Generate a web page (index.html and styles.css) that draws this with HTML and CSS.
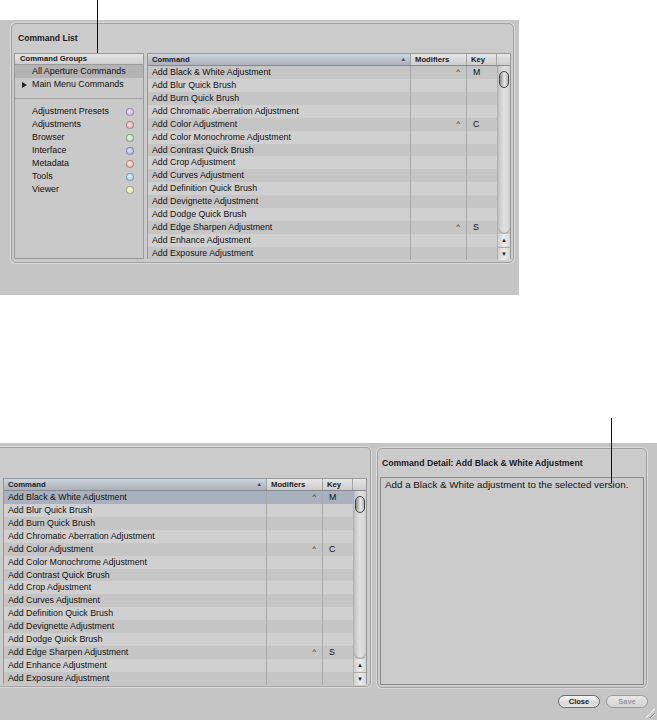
FILE: index.html
```html
<!DOCTYPE html>
<html>
<head>
<meta charset="utf-8">
<link rel="stylesheet" href="styles.css">
</head>
<body>
<div class="callout callout-top"></div>
<section class="fig fig-top">
  <div class="panel panel-list">
    <div class="panel-title">Command List</div>
    <div class="panel-body">
      <div class="groups">
        <div class="groups-head">Command Groups</div>
        <div class="group sel">All Aperture Commands</div>
        <div class="group"><svg class="tri" width="5" height="6" viewBox="0 0 5 6"><path d="M0 0 L5 3 L0 6 Z" fill="#222"/></svg>Main Menu Commands</div>
        <div class="sep"></div>
        <div class="group">Adjustment Presets<span class="dot d-purple"></span></div>
        <div class="group">Adjustments<span class="dot d-pink"></span></div>
        <div class="group">Browser<span class="dot d-green"></span></div>
        <div class="group">Interface<span class="dot d-blue"></span></div>
        <div class="group">Metadata<span class="dot d-salmon"></span></div>
        <div class="group">Tools<span class="dot d-sky"></span></div>
        <div class="group">Viewer<span class="dot d-yellow"></span></div>
      </div>
      <div class="table">
        <div class="thead">
          <div class="th th-sorted">Command<span class="sort">&#9650;</span></div>
          <div class="th">Modifiers</div>
          <div class="th">Key</div>
          <div class="th th-end"></div>
        </div>
        <div class="tbody">
          <div class="rows">
            <div class="row"><div class="c-cmd">Add Black &amp; White Adjustment</div><div class="c-mod">^</div><div class="c-key">M</div></div>
            <div class="row"><div class="c-cmd">Add Blur Quick Brush</div><div class="c-mod"></div><div class="c-key"></div></div>
            <div class="row"><div class="c-cmd">Add Burn Quick Brush</div><div class="c-mod"></div><div class="c-key"></div></div>
            <div class="row"><div class="c-cmd">Add Chromatic Aberration Adjustment</div><div class="c-mod"></div><div class="c-key"></div></div>
            <div class="row"><div class="c-cmd">Add Color Adjustment</div><div class="c-mod">^</div><div class="c-key">C</div></div>
            <div class="row"><div class="c-cmd">Add Color Monochrome Adjustment</div><div class="c-mod"></div><div class="c-key"></div></div>
            <div class="row"><div class="c-cmd">Add Contrast Quick Brush</div><div class="c-mod"></div><div class="c-key"></div></div>
            <div class="row"><div class="c-cmd">Add Crop Adjustment</div><div class="c-mod"></div><div class="c-key"></div></div>
            <div class="row"><div class="c-cmd">Add Curves Adjustment</div><div class="c-mod"></div><div class="c-key"></div></div>
            <div class="row"><div class="c-cmd">Add Definition Quick Brush</div><div class="c-mod"></div><div class="c-key"></div></div>
            <div class="row"><div class="c-cmd">Add Devignette Adjustment</div><div class="c-mod"></div><div class="c-key"></div></div>
            <div class="row"><div class="c-cmd">Add Dodge Quick Brush</div><div class="c-mod"></div><div class="c-key"></div></div>
            <div class="row"><div class="c-cmd">Add Edge Sharpen Adjustment</div><div class="c-mod">^</div><div class="c-key">S</div></div>
            <div class="row"><div class="c-cmd">Add Enhance Adjustment</div><div class="c-mod"></div><div class="c-key"></div></div>
            <div class="row"><div class="c-cmd">Add Exposure Adjustment</div><div class="c-mod"></div><div class="c-key"></div></div>
          </div>
          <div class="scroll">
            <div class="track"><div class="thumb"></div></div>
            <div class="arrows"><div class="arr">&#9650;</div><div class="arr">&#9660;</div></div>
          </div>
        </div>
      </div>
    </div>
  </div>
</section>

<div class="callout callout-bottom"></div>
<section class="fig fig-bottom">
  <div class="panes">
    <div class="panel panel-cut">
      <div class="table">
        <div class="thead">
          <div class="th th-sorted">Command<span class="sort">&#9650;</span></div>
          <div class="th">Modifiers</div>
          <div class="th">Key</div>
          <div class="th th-end"></div>
        </div>
        <div class="tbody">
          <div class="rows">
            <div class="row selected"><div class="c-cmd">Add Black &amp; White Adjustment</div><div class="c-mod">^</div><div class="c-key">M</div></div>
            <div class="row"><div class="c-cmd">Add Blur Quick Brush</div><div class="c-mod"></div><div class="c-key"></div></div>
            <div class="row"><div class="c-cmd">Add Burn Quick Brush</div><div class="c-mod"></div><div class="c-key"></div></div>
            <div class="row"><div class="c-cmd">Add Chromatic Aberration Adjustment</div><div class="c-mod"></div><div class="c-key"></div></div>
            <div class="row"><div class="c-cmd">Add Color Adjustment</div><div class="c-mod">^</div><div class="c-key">C</div></div>
            <div class="row"><div class="c-cmd">Add Color Monochrome Adjustment</div><div class="c-mod"></div><div class="c-key"></div></div>
            <div class="row"><div class="c-cmd">Add Contrast Quick Brush</div><div class="c-mod"></div><div class="c-key"></div></div>
            <div class="row"><div class="c-cmd">Add Crop Adjustment</div><div class="c-mod"></div><div class="c-key"></div></div>
            <div class="row"><div class="c-cmd">Add Curves Adjustment</div><div class="c-mod"></div><div class="c-key"></div></div>
            <div class="row"><div class="c-cmd">Add Definition Quick Brush</div><div class="c-mod"></div><div class="c-key"></div></div>
            <div class="row"><div class="c-cmd">Add Devignette Adjustment</div><div class="c-mod"></div><div class="c-key"></div></div>
            <div class="row"><div class="c-cmd">Add Dodge Quick Brush</div><div class="c-mod"></div><div class="c-key"></div></div>
            <div class="row"><div class="c-cmd">Add Edge Sharpen Adjustment</div><div class="c-mod">^</div><div class="c-key">S</div></div>
            <div class="row"><div class="c-cmd">Add Enhance Adjustment</div><div class="c-mod"></div><div class="c-key"></div></div>
            <div class="row"><div class="c-cmd">Add Exposure Adjustment</div><div class="c-mod"></div><div class="c-key"></div></div>
          </div>
          <div class="scroll">
            <div class="track"><div class="thumb"></div></div>
            <div class="arrows"><div class="arr">&#9650;</div><div class="arr">&#9660;</div></div>
          </div>
        </div>
      </div>
    </div>
    <div class="panel panel-detail">
      <div class="detail-title">Command Detail: Add Black &amp; White Adjustment</div>
      <div class="detail-box">Add a Black &amp; White adjustment to the selected version.</div>
    </div>
  </div>
  <div class="buttons">
    <div class="btn">Close</div>
    <div class="btn btn-disabled">Save</div>
  </div>
  <div class="grip"></div>
</section>
</body>
</html>
```
FILE: styles.css
```css
* { box-sizing: border-box; }
html, body { margin: 0; padding: 0; }
body {
  width: 657px;
  height: 720px;
  background: #ffffff;
  font-family: "Liberation Sans", Arial, sans-serif;
  color: #111;
  position: relative;
  overflow: hidden;
}

.callout { position: absolute; width: 1px; background: #111; z-index: 5; }
.callout-top { left: 97px; top: 0; height: 53px; }
.callout-bottom { left: 611px; top: 418px; height: 65px; }

.fig { background: #c5c5c5; }
.fig-top {
  margin-top: 20px;
  width: 519px;
  height: 275px;
  padding: 3px 0 0 11px;
}
.fig-bottom {
  margin-top: 148px;
  width: 657px;
  height: 277px;
  padding-top: 4px;
  position: relative;
}

.panel {
  background: #cbcbcb;
  border: 1px solid #a2a2a2;
  border-radius: 5px;
  box-shadow: 0 0 0 1px #d9d9d9;
}
.panel-list { width: 503px; height: 240px; }
.panel-title {
  height: 29px;
  padding: 9px 0 0 6px;
  font-size: 8.6px;
  font-weight: bold;
  line-height: 10px;
  color: #1a1a1a;
}
.panel-body {
  display: flex;
  gap: 3px;
  padding-left: 2px;
  height: 206px;
}

.groups {
  width: 130px;
  height: 206px;
  border: 1px solid #9a9a9a;
  background: #c9c9c9;
}
.groups-head {
  height: 11px;
  border-bottom: 1px solid #9a9a9a;
  background: linear-gradient(#e4e4e4, #cfcfcf);
  font-size: 7.7px;
  font-weight: bold;
  line-height: 10px;
  padding-left: 5px;
  color: #1a1a1a;
}
.group {
  height: 13px;
  line-height: 13px;
  font-size: 8.9px;
  padding: 0 9px 0 17px;
  display: flex;
  align-items: center;
  justify-content: space-between;
  white-space: nowrap;
  position: relative;
}
.group.sel { background: #b4b4b4; }
.tri { position: absolute; left: 7px; top: 4px; }
.sep { height: 1px; background: #a4a4a4; margin: 7px 0 6px; }
.dot {
  width: 8px;
  height: 8px;
  border-radius: 50%;
  border: 1px solid rgba(0, 0, 0, 0.28);
}
.d-purple { background: radial-gradient(circle at 40% 35%, #eee4f6, #c4ade0); }
.d-pink   { background: radial-gradient(circle at 40% 35%, #f6e0e4, #e0a6b2); }
.d-green  { background: radial-gradient(circle at 40% 35%, #e4f6e4, #a8dca8); }
.d-blue   { background: radial-gradient(circle at 40% 35%, #e2e2f6, #a6a6e0); }
.d-salmon { background: radial-gradient(circle at 40% 35%, #f8e6dc, #e8b09c); }
.d-sky    { background: radial-gradient(circle at 40% 35%, #e2eef8, #a6c6e8); }
.d-yellow { background: radial-gradient(circle at 40% 35%, #f6f6e0, #e0e0a2); }

.table {
  width: 364px;
  height: 206px;
  border: 1px solid #999;
  display: flex;
  flex-direction: column;
  background: #cacaca;
}
.thead {
  display: grid;
  grid-template-columns: 263px 56px 30px 13px;
  height: 12px;
  border-bottom: 1px solid #8a8a8a;
}
.th {
  position: relative;
  background: linear-gradient(#e6e6e6, #cdcdcd);
  border-right: 1px solid #a3a3a3;
  font-size: 7.7px;
  font-weight: bold;
  line-height: 11px;
  padding-left: 4px;
  color: #1a1a1a;
  white-space: nowrap;
}
.th-sorted { background: linear-gradient(#cfd5dd, #a9b1bc); }
.th-end { border-right: none; }
.sort {
  position: absolute;
  right: 4px;
  top: 0;
  font-size: 5.5px;
  color: #444;
}
.tbody { flex: 1; display: flex; }
.rows { width: 349px; }
.row {
  display: grid;
  grid-template-columns: 263px 56px 30px;
  height: 12.93px;
  line-height: 12.93px;
  font-size: 8.8px;
  color: #111;
}
.row:nth-child(odd) { background: #c5c5c5; }
.row:nth-child(even) { background: #d0d0d0; }
.row.selected { background: #a8b1bd; }
.c-cmd { padding-left: 4px; border-right: 1px solid #a9a9a9; white-space: nowrap; overflow: hidden; }
.c-mod { border-right: 1px solid #a9a9a9; text-align: right; padding-right: 6px; font-size: 8px; }
.c-key { padding-left: 6px; }

.scroll {
  width: 13px;
  display: flex;
  flex-direction: column;
  background: #cdcdcd;
  border-left: 1px solid #b0b0b0;
}
.track {
  flex: 1;
  background: linear-gradient(90deg, #c4c4c4, #e0e0e0 50%, #d2d2d2);
  border-radius: 0 0 6px 6px;
  box-shadow: inset 0 -1px 1px #9c9c9c;
  padding-top: 5px;
  display: flex;
  justify-content: center;
}
.thumb {
  width: 10px;
  height: 17px;
  border: 1.5px solid #4a4a4a;
  border-radius: 5px;
  background: linear-gradient(90deg, #8c8c8c, #e8e8e8 55%, #b4b4b4);
}
.arrows {
  height: 26px;
  display: flex;
  flex-direction: column;
  background: linear-gradient(90deg, #d0d0d0, #ececec, #d6d6d6);
}
.arr {
  height: 13px;
  font-size: 6px;
  line-height: 13px;
  text-align: center;
  color: #222;
}
.arr + .arr { border-top: 1px solid #a8a8a8; }

.panes { display: flex; gap: 6px; align-items: flex-start; }
.panel-cut {
  width: 371px;
  height: 240px;
  border-left: none;
  border-radius: 0 5px 5px 0;
  padding: 30px 0 0 3px;
}
.panel-detail {
  width: 270px;
  height: 240px;
  margin-top: 1px;
  padding: 0 2px;
}
.detail-title {
  height: 28px;
  padding: 9px 0 0 2px;
  font-size: 8.7px;
  font-weight: bold;
  line-height: 10px;
  color: #1a1a1a;
  white-space: nowrap;
}
.detail-box {
  height: 208px;
  border: 1px solid #8c8c8c;
  background: #cbcbcb;
  font-size: 9.8px;
  line-height: 11px;
  padding: 1px 4px;
  color: #111;
  white-space: nowrap;
}

.buttons {
  display: flex;
  justify-content: flex-end;
  gap: 6px;
  padding-right: 9px;
  margin-top: 7px;
}
.btn {
  width: 42px;
  height: 13px;
  border: 1px solid #6b6b6b;
  border-radius: 7px;
  background: linear-gradient(#fafafa, #d8d8d8 60%, #e6e6e6);
  font-size: 7.5px;
  font-weight: bold;
  line-height: 11px;
  text-align: center;
  color: #222;
}
.btn-disabled { border-color: #9a9a9a; color: #9a9a9a; background: linear-gradient(#e8e8e8, #d2d2d2); }

.grip {
  position: absolute;
  right: 2px;
  bottom: 2px;
  width: 10px;
  height: 10px;
  background: repeating-linear-gradient(135deg, transparent 0 2px, #8a8a8a 2px 3px, #ededed 3px 4px);
  clip-path: polygon(100% 0, 100% 100%, 0 100%);
}
```
